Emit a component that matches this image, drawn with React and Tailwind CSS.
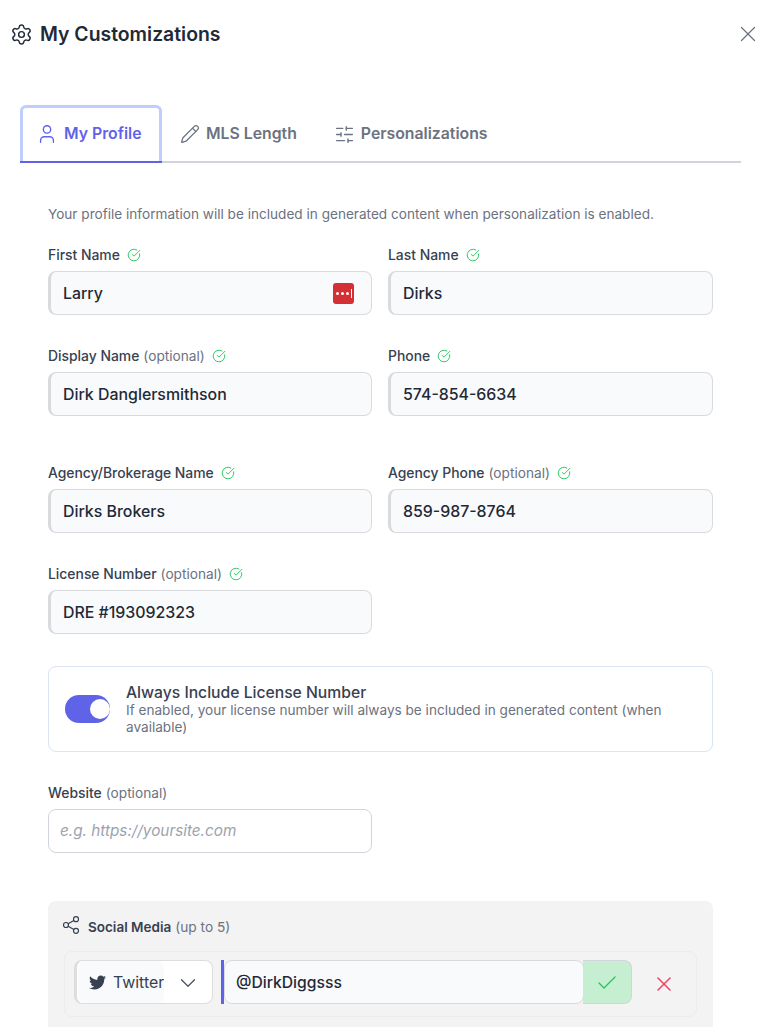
import React from 'react';
import { Settings, X, User, Pencil, SlidersHorizontal, Share2, ChevronDown, Check, CircleCheckBig } from 'lucide-react';
import { FaTwitter } from 'react-icons/fa';

function Field({ label, optional, checked = true, value, placeholder, children }) {
  return (
    <div className="w-full">
      <div className="flex items-center h-[20px] mb-[6px] leading-[20px]">
        <span className="text-[13.9px] font-medium text-[#374151]">{label}</span>
        {optional && <span className="ml-1 text-[13.7px] text-[#6b7280]">(optional)</span>}
        {checked && <CircleCheckBig className="ml-[7px] w-[14px] h-[14px] text-[#22c55e]" strokeWidth={1.6} />}
      </div>
      {placeholder ? (
        <div className="flex items-center h-[44px] pt-px px-[11px] rounded-lg border border-[#d1d5db] bg-white text-[15.3px] italic text-[#9ca3af]">
          {placeholder}
        </div>
      ) : (
        <div className="flex items-center justify-between h-[44px] pl-[12px] pr-[17px] rounded-lg border border-[#d8dade] border-l-[3px] bg-[#f9fafb] text-[15.9px] font-medium text-[#1f2937]">
          <span className="pt-[2px]">{value}</span>
          {children}
        </div>
      )}
    </div>
  );
}

function Tab({ icon: Icon, label, active, size = 20, className = '' }) {
  if (active) {
    return (
      <div className="flex items-center gap-[6px] w-[142px] h-[56px] pl-[13px] pb-[1px] rounded-t-md border-[3px] border-[#c0cdfd] border-b-0 shadow-[0_2px_0_#5e63e8] text-[#5e63e8] text-[15.8px] font-semibold">
        <Icon style={{ width: size, height: size }} strokeWidth={1.5} />
        {label}
      </div>
    );
  }
  return (
    <div className={`flex items-center gap-[6px] px-[18px] pt-[2px] h-[56px] text-[#6b7280] text-[15.8px] font-semibold ${className}`}>
      <Icon style={{ width: size, height: size }} strokeWidth={1.5} />
      {label}
    </div>
  );
}

export default function App() {
  return (
    <div className="h-[1027px] overflow-hidden bg-white font-['Inter',sans-serif]">
      {/* 제목 */}
      <div className="flex items-center justify-between pl-[10px] pr-[10px] pt-[21px] h-[47px]">
        <div className="flex items-center gap-[7px]">
          <Settings className="w-[23px] h-[23px] text-[#1f2937]" strokeWidth={1.5} />
          <h1 className="text-[19.4px] leading-[26px] font-semibold text-[#1f2937]">My Customizations</h1>
        </div>
        <X className="w-[26px] h-[26px] text-[#6b7280]" strokeWidth={1.2} />
      </div>

      {/* 탭 */}
      <div className="mt-[58px] ml-[20px] mr-[30px] flex border-b-2 border-[#d1d5db] h-[56px] box-content">
        <Tab icon={User} label="My Profile" size={22} active />
        <Tab icon={Pencil} label="MLS Length" size={20} />
        <Tab icon={SlidersHorizontal} label="Personalizations" size={21} className="ml-px" />
      </div>

      <div className="pl-[48px] pr-[58px]">
        <p className="mt-[41px] text-[13.6px] leading-[20px] text-[#6b7280]">
          Your profile information will be included in generated content when personalization is enabled.
        </p>

        <div className="mt-[21px] grid grid-cols-[324px_325px] gap-x-[16px] gap-y-[31px]">
          <Field label="First Name" value="Larry">
            <div className="flex items-center justify-center gap-[2px] w-[21px] h-[21px] rounded-[3px] bg-[#d32f34]">
              <span className="w-[3px] h-[3px] rounded-full bg-white" />
              <span className="w-[3px] h-[3px] rounded-full bg-white" />
              <span className="w-[3px] h-[3px] rounded-full bg-white" />
              <span className="w-px h-[9px] bg-white" />
            </div>
          </Field>
          <Field label="Last Name" value="Dirks" />
          <Field label="Display Name" optional value="Dirk Danglersmithson" />
          <Field label="Phone" value="574-854-6634" />
        </div>

        <div className="mt-[47px] grid grid-cols-[324px_325px] gap-x-[16px] gap-y-[31px]">
          <Field label="Agency/Brokerage Name" value="Dirks Brokers" />
          <Field label="Agency Phone" optional value="859-987-8764" />
          <Field label="License Number" optional value="DRE #193092323" />
        </div>

        {/* 라이선스 토글 */}
        <div className="mt-[32px] flex items-center h-[86px] pl-[16px] pr-[16px] rounded-lg border border-[#dbe4f0] bg-white">
          <div className="shrink-0 flex items-center justify-end w-[45px] h-[28px] rounded-full bg-[#5e63e8]">
            <span className="w-[20px] h-[20px] rounded-full bg-white" />
          </div>
          <div className="ml-[16px] pt-[2px]">
            <div className="text-[15.7px] leading-[18px] font-medium text-[#374151]">Always Include License Number</div>
            <div className="text-[13.6px] leading-[17px] text-[#6b7280]">
              If enabled, your license number will always be included in generated content (when available)
            </div>
          </div>
        </div>

        <div className="mt-[31px] w-[324px]">
          <Field label="Website" optional checked={false} placeholder="e.g. https://yoursite.com" />
        </div>

        {/* 소셜 미디어 */}
        <div className="mt-[48px] h-[200px] rounded-lg bg-[#f3f3f3] px-[16px] pt-[16px]">
          <div className="flex items-center h-[20px] leading-[20px]">
            <Share2 className="-ml-[3px] -mt-[4px] w-[20px] h-[20px] text-[#374151]" strokeWidth={1.4} />
            <span className="ml-[7px] text-[13.5px] font-semibold text-[#374151]">Social Media</span>
            <span className="ml-1 text-[13.7px] text-[#6b7280]">(up to 5)</span>
          </div>
          <div className="mt-[14px] flex items-start h-[66px] pt-[8px] pl-[9px] rounded-lg border border-[#ececec]">
            <div className="relative flex items-center w-[139px] h-[44px] rounded-lg border border-[#dddddd] border-l-[3px] bg-white overflow-hidden">
              <div className="flex items-center gap-[7px] w-[86px] h-full pl-[11px] pt-px ml-px rounded-lg bg-[#f9fafb] text-[15.9px] text-[#374151] overflow-hidden whitespace-nowrap">
                <FaTwitter className="shrink-0 w-[17px] h-[17px] text-[#374151]" />
                Twitter/X
              </div>
              <ChevronDown className="absolute right-[11px] top-[9px] w-[26px] h-[26px] text-[#4b5563]" strokeWidth={1.2} />
            </div>
            <div className="ml-[8px] w-[3px] h-[44px] bg-[#5e63e8]" />
            <div className="flex items-center w-[360px] h-[44px] pl-[11px] pt-[2px] rounded-lg border border-[#d8dade] bg-[#f9fafb] text-[15.7px] font-medium text-[#1f2937]">
              @DirkDiggsss
            </div>
            <div className="flex items-center justify-center w-[49px] h-[44px] pt-px -ml-px rounded-r-lg border border-[#d1d5db] border-l-0 bg-[#c6efd2]">
              <Check className="w-[24px] h-[24px] text-[#22c55e]" strokeWidth={1.3} />
            </div>
            <X className="ml-[20px] mt-[12px] w-[24px] h-[24px] text-[#f43f5e]" strokeWidth={1.5} />
          </div>
        </div>
      </div>
    </div>
  );
}
